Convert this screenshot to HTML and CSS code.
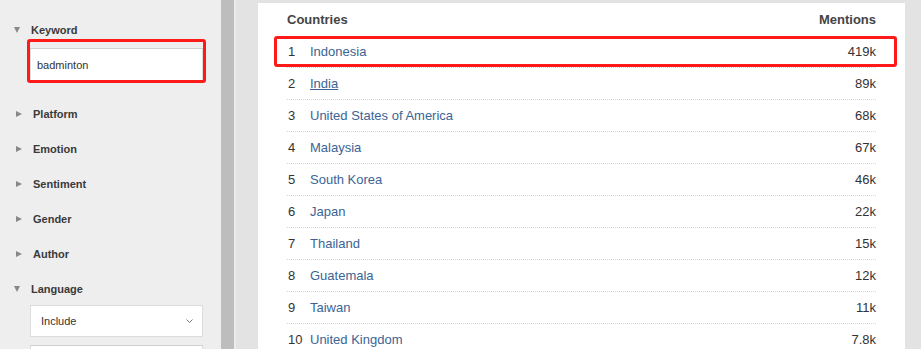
FILE: index.html
```html
<!DOCTYPE html>
<html lang="en">
<head>
  <meta charset="UTF-8">
  <title>Mentions by country</title>
  <meta name="viewport" content="width=device-width, initial-scale=1">
  <link rel="stylesheet" href="styles.css">
</head>
<body>
  <div class="page">
    <aside class="sidebar">
      <div class="filter open first">
        <div class="filter-head"><span class="caret"></span>Keyword</div>
        <div class="filter-body">
          <input class="field" type="text" value="badminton">
          <div class="mark mark-keyword"></div>
        </div>
      </div>
      <div class="filter"><div class="filter-head"><span class="caret"></span>Platform</div></div>
      <div class="filter"><div class="filter-head"><span class="caret"></span>Emotion</div></div>
      <div class="filter"><div class="filter-head"><span class="caret"></span>Sentiment</div></div>
      <div class="filter"><div class="filter-head"><span class="caret"></span>Gender</div></div>
      <div class="filter"><div class="filter-head"><span class="caret"></span>Author</div></div>
      <div class="filter open">
        <div class="filter-head"><span class="caret"></span>Language</div>
        <div class="filter-body last">
          <div class="field select">
            <span>Include</span>
            <svg width="7" height="4" viewBox="0 0 7 4"><path d="M0.5 0.5 L3.5 3.5 L6.5 0.5" fill="none" stroke="#777" stroke-width="1"/></svg>
          </div>
          <div class="field"></div>
        </div>
      </div>
    </aside>
    <div class="scrollbar"></div>
    <main class="main">
      <div class="card">
        <div class="mark mark-row"></div>
        <div class="row head">
          <span class="name">Countries</span>
          <span class="value">Mentions</span>
        </div>
        <div class="row"><span class="num">1</span><a class="name">Indonesia</a><span class="value">419k</span></div>
        <div class="row"><span class="num">2</span><a class="name hover">India</a><span class="value">89k</span></div>
        <div class="row"><span class="num">3</span><a class="name">United States of America</a><span class="value">68k</span></div>
        <div class="row"><span class="num">4</span><a class="name">Malaysia</a><span class="value">67k</span></div>
        <div class="row"><span class="num">5</span><a class="name">South Korea</a><span class="value">46k</span></div>
        <div class="row"><span class="num">6</span><a class="name">Japan</a><span class="value">22k</span></div>
        <div class="row"><span class="num">7</span><a class="name">Thailand</a><span class="value">15k</span></div>
        <div class="row"><span class="num">8</span><a class="name">Guatemala</a><span class="value">12k</span></div>
        <div class="row"><span class="num">9</span><a class="name">Taiwan</a><span class="value">11k</span></div>
        <div class="row"><span class="num">10</span><a class="name">United Kingdom</a><span class="value">7.8k</span></div>
      </div>
    </main>
  </div>
</body>
</html>
```

FILE: styles.css
```css
body {
  margin: 0;
  font-family: 'Liberation Sans', Arial, sans-serif;
  color: #333;
  background: #e3e3e3;
  overflow: hidden;
}
.page {
  display: flex;
  height: 349px;
  overflow: hidden;
}
.sidebar {
  width: 221px;
  background: #eeeeee;
  padding-top: 12px;
  box-sizing: border-box;
  overflow: hidden;
}
.filter-head {
  height: 35px;
  display: flex;
  align-items: center;
  padding-left: 14px;
  font-size: 11px;
  font-weight: bold;
  color: #3a3a3a;
}
.caret {
  width: 0;
  height: 0;
  border-top: 3.5px solid transparent;
  border-bottom: 3.5px solid transparent;
  border-left: 6px solid #888;
  margin-right: 11px;
  margin-left: 2px;
}
.open .caret {
  border-left: 3.5px solid transparent;
  border-right: 3.5px solid transparent;
  border-top: 6px solid #888;
  border-bottom: 0;
  margin-left: 0;
  margin-right: 11px;
}
.filter-body {
  position: relative;
  padding: 1px 18px 0 30px;
}
.first .filter-body {
  padding-bottom: 15px;
}
.filter-body.last {
  margin-top: -2px;
}
.field {
  display: block;
  width: 173px;
  height: 33px;
  box-sizing: border-box;
  border: 1px solid #dcdcdc;
  border-top-color: #cfcfcf;
  background: #fff;
  font-family: inherit;
  font-size: 11px;
  color: #333;
  padding: 0 6px;
  margin: 0;
  outline: none;
}
.select {
  height: 32px;
  display: flex;
  align-items: center;
  justify-content: space-between;
  padding: 0 9px 0 10px;
  margin-bottom: 8px;
  border-color: #dcdcdc;
}
.mark {
  position: absolute;
  border: 3px solid #ff1a1a;
  border-radius: 3px;
  pointer-events: none;
}
.mark-keyword {
  left: 27px;
  top: -8px;
  width: 173px;
  height: 38px;
}
.scrollbar {
  width: 13px;
  background: #bdbdbd;
}
.main {
  flex: 1;
  border-left: 2px solid #ebebeb;
  padding: 3px 16px 0 22px;
}
.card {
  position: relative;
  background: #fff;
  height: 100%;
  padding: 0 29px;
}
.row {
  display: flex;
  align-items: center;
  height: 31px;
  border-bottom: 1px dotted #d6d6d6;
  font-size: 13px;
}
.row.head {
  height: 33px;
  border-bottom: 0;
  font-weight: bold;
  color: #444;
}
.num {
  width: 22px;
  padding-left: 1px;
  color: #333;
}
.name {
  flex: 1;
  color: #3b6494;
  text-decoration: none;
}
.head .name {
  color: #444;
}
.name.hover {
  text-decoration: underline;
}
.value {
  color: #333;
}
.head .value {
  color: #444;
}
.mark-row {
  left: 16px;
  top: 33px;
  width: 617px;
  height: 25px;
}
```
